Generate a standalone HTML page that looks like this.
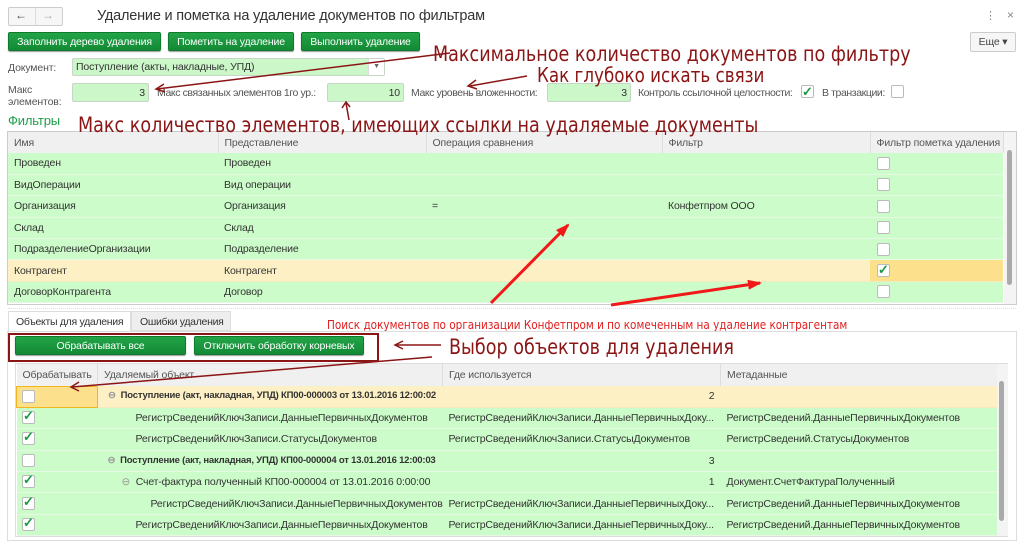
<!DOCTYPE html>
<html><head><meta charset="utf-8"><style>
*{box-sizing:border-box;margin:0;padding:0}
body{width:1024px;height:547px;overflow:hidden;background:#fff;font-family:"Liberation Sans",sans-serif;font-size:10.5px;color:#333;position:relative;letter-spacing:-0.15px}
.a{position:absolute;white-space:nowrap}
.gb{position:absolute;background:linear-gradient(#22a447,#138a35);border:1px solid #0f7a2c;color:#fff;font-size:10.5px;border-radius:2px;box-shadow:0 1px 1px #999;display:flex;align-items:center;justify-content:center;white-space:nowrap}
.fld{position:absolute;background:#ccf7c9;border:1px solid #c7d7c7;border-radius:2px;text-align:right;padding-right:3px;color:#333;display:flex;align-items:center;justify-content:flex-end}
.cb{position:absolute;width:13px;height:13px;background:#fff;border:1px solid #bbb;border-radius:2px}
.ck{position:absolute;color:#1a9940;font-size:13px;font-weight:bold;line-height:13px}
.red{position:absolute;color:#8b1515;font-family:"DejaVu Sans Condensed","DejaVu Sans",sans-serif;white-space:nowrap;transform-origin:0 0;letter-spacing:0}
table{border-collapse:collapse;table-layout:fixed}
td{white-space:nowrap;overflow:hidden;padding-left:6px;vertical-align:middle;line-height:12px}
.hd td{background:#f0f0f0;color:#555;border-right:1px solid #ddd}
.g td{background:#ccfcc9;border-bottom:1px solid #e6f7e4}
.y td{background:#fdf0c4;border-bottom:1px solid #f5e9c0}
.b{font-weight:bold;font-size:9.5px;padding-left:10px;letter-spacing:-0.2px}
</style></head><body>
<div class="a" style="left:8px;top:7px;width:55px;height:19px;border:1px solid #ccc;border-radius:2px;background:#f6f6f6"></div>
<div class="a" style="left:35px;top:8px;width:1px;height:17px;background:#ddd"></div>
<div class="a" style="left:15px;top:8px;font-size:12px;color:#444">←</div>
<div class="a" style="left:42px;top:8px;font-size:12px;color:#aaa">→</div>
<div class="a" style="left:97px;top:8px;font-size:14.5px;color:#333;letter-spacing:-0.2px">Удаление и пометка на удаление документов по фильтрам</div>
<div class="a" style="left:985px;top:9px;color:#888;font-size:11px">⋮</div>
<div class="a" style="left:1007px;top:8px;color:#888;font-size:12px">×</div>
<div class="gb" style="left:8px;top:32px;width:153px;height:19px">Заполнить дерево удаления</div>
<div class="gb" style="left:168px;top:32px;width:126px;height:19px">Пометить на удаление</div>
<div class="gb" style="left:301px;top:32px;width:119px;height:19px">Выполнить удаление</div>
<div class="a" style="left:970px;top:32px;width:46px;height:20px;border:1px solid #ccc;border-radius:2px;background:#f6f6f6;text-align:center;line-height:18px;color:#444">Еще ▾</div>
<div class="a" style="left:8px;top:62px;color:#555">Документ:</div>
<div class="fld" style="left:72px;top:58px;width:313px;height:18px;justify-content:flex-start;padding-left:3px">Поступление (акты, накладные, УПД)</div>
<div class="a" style="left:368px;top:59px;width:16px;height:16px;background:#fff;border-left:1px solid #ddd;text-align:center;font-size:7px;line-height:16px;color:#666">▼</div>
<div class="a" style="left:8px;top:84px;color:#555;line-height:12px">Макс<br>элементов:</div>
<div class="fld" style="left:72px;top:83px;width:77px;height:19px">3</div>
<div class="a" style="left:157px;top:87px;color:#555;letter-spacing:-0.4px">Макс связанных элементов 1го ур.:</div>
<div class="fld" style="left:327px;top:83px;width:77px;height:19px">10</div>
<div class="a" style="left:411px;top:87px;color:#555;letter-spacing:-0.4px">Макс уровень вложенности:</div>
<div class="fld" style="left:547px;top:83px;width:84px;height:19px">3</div>
<div class="a" style="left:638px;top:87px;color:#555;letter-spacing:-0.45px">Контроль ссылочной целостности:</div>
<div class="cb" style="left:801px;top:85px"></div><div class="ck" style="left:802px;top:85px">✓</div>
<div class="a" style="left:822px;top:87px;color:#555;letter-spacing:-0.4px">В транзакции:</div>
<div class="cb" style="left:891px;top:85px"></div>
<div class="a" style="left:8px;top:113px;color:#1fa04a;font-size:13px">Фильтры</div>

<div class="a" style="left:7px;top:131px;width:1010px;height:174px;border:1px solid #ccc"></div>
<table class="a" style="left:8px;top:132px;width:995px">
<colgroup><col style="width:210px"><col style="width:208px"><col style="width:236px"><col style="width:208px"><col style="width:133px"></colgroup>
<tr class="hd" style="height:21px"><td>Имя</td><td>Представление</td><td>Операция сравнения</td><td>Фильтр</td><td>Фильтр пометка удаления</td></tr>
<tr class="g" style="height:21.4px"><td>Проведен</td><td>Проведен</td><td></td><td></td><td></td></tr>
<tr class="g" style="height:21.4px"><td>ВидОперации</td><td>Вид операции</td><td></td><td></td><td></td></tr>
<tr class="g" style="height:21.4px"><td>Организация</td><td>Организация</td><td>=</td><td>Конфетпром ООО</td><td></td></tr>
<tr class="g" style="height:21.4px"><td>Склад</td><td>Склад</td><td></td><td></td><td></td></tr>
<tr class="g" style="height:21.4px"><td>ПодразделениеОрганизации</td><td>Подразделение</td><td></td><td></td><td></td></tr>
<tr class="y" style="height:21.4px"><td>Контрагент</td><td>Контрагент</td><td></td><td></td><td style="background:#fde08c"></td></tr>
<tr class="g" style="height:21.4px"><td>ДоговорКонтрагента</td><td>Договор</td><td></td><td></td><td></td></tr>
</table>
<div class="a" style="left:1004px;top:132px;width:12px;height:172px;background:#f4f4f4"></div>
<div class="a" style="left:1007px;top:150px;width:5px;height:135px;background:#aaa;border-radius:3px"></div>
<div class="cb" style="left:877px;top:157px"></div>
<div class="cb" style="left:877px;top:178px"></div>
<div class="cb" style="left:877px;top:200px"></div>
<div class="cb" style="left:877px;top:221px"></div>
<div class="cb" style="left:877px;top:243px"></div>
<div class="cb" style="left:877px;top:264px"></div><div class="ck" style="left:878px;top:263px">✓</div>
<div class="cb" style="left:877px;top:285px"></div>
<div class="a" style="left:8px;top:308px;width:1008px;border-top:1px dotted #ddd"></div>

<div class="a" style="left:8px;top:311px;width:123px;height:21px;background:#fff;border:1px solid #ddd;border-bottom:none;padding:4px 0 0 7px;letter-spacing:-0.3px">Объекты для удаления</div>
<div class="a" style="left:131px;top:311px;width:100px;height:20px;background:#eee;border:1px solid #ddd;padding:4px 0 0 8px;letter-spacing:-0.3px">Ошибки удаления</div>
<div class="red" style="left:327px;top:317px;color:#e02020;font-size:12.5px;transform:scaleX(0.93)">Поиск документов по организации Конфетпром и по комеченным на удаление контрагентам</div>
<div class="a" style="left:7px;top:331px;width:1010px;height:210px;border:1px solid #ddd"></div>
<div class="a" style="left:8px;top:333px;width:371px;height:29px;border:2px solid #8b1515"></div>
<div class="gb" style="left:15px;top:336px;width:171px;height:19px">Обрабатывать все</div>
<div class="gb" style="left:194px;top:336px;width:170px;height:19px">Отключить обработку корневых</div>

<div class="a" style="left:15px;top:363px;width:993px;height:174px;border:1px solid #ddd"></div>
<table class="a" style="left:16px;top:364px;width:981px">
<colgroup><col style="width:81px"><col style="width:345px"><col style="width:278px"><col style="width:277px"></colgroup>
<tr class="hd" style="height:22px"><td>Обрабатывать</td><td>Удаляемый объект</td><td>Где используется</td><td>Метаданные</td></tr>
<tr class="y" style="height:21.4px"><td style="background:#fde08c;border:1px solid #f2b520"></td><td class="b"><span style="color:#999">⊖</span> &nbsp;Поступление (акт, накладная, УПД) КП00-000003 от 13.01.2016 12:00:02</td><td style="text-align:right;padding-right:6px">2</td><td></td></tr>
<tr class="g" style="height:21.4px"><td></td><td style="padding-left:38px">РегистрСведенийКлючЗаписи.ДанныеПервичныхДокументов</td><td>РегистрСведенийКлючЗаписи.ДанныеПервичныхДоку...</td><td>РегистрСведений.ДанныеПервичныхДокументов</td></tr>
<tr class="g" style="height:21.4px"><td></td><td style="padding-left:38px">РегистрСведенийКлючЗаписи.СтатусыДокументов</td><td>РегистрСведенийКлючЗаписи.СтатусыДокументов</td><td>РегистрСведений.СтатусыДокументов</td></tr>
<tr class="g" style="height:21.4px"><td></td><td class="b"><span style="color:#999">⊖</span> &nbsp;Поступление (акт, накладная, УПД) КП00-000004 от 13.01.2016 12:00:03</td><td style="text-align:right;padding-right:6px">3</td><td></td></tr>
<tr class="g" style="height:21.4px"><td></td><td style="padding-left:24px"><span style="color:#999">⊖</span> &nbsp;Счет-фактура полученный КП00-000004 от 13.01.2016 0:00:00</td><td style="text-align:right;padding-right:6px">1</td><td>Документ.СчетФактураПолученный</td></tr>
<tr class="g" style="height:21.4px"><td></td><td style="padding-left:53px">РегистрСведенийКлючЗаписи.ДанныеПервичныхДокументов</td><td>РегистрСведенийКлючЗаписи.ДанныеПервичныхДоку...</td><td>РегистрСведений.ДанныеПервичныхДокументов</td></tr>
<tr class="g" style="height:21.4px"><td></td><td style="padding-left:38px">РегистрСведенийКлючЗаписи.ДанныеПервичныхДокументов</td><td>РегистрСведенийКлючЗаписи.ДанныеПервичныхДоку...</td><td>РегистрСведений.ДанныеПервичныхДокументов</td></tr>
</table>
<div class="a" style="left:997px;top:364px;width:11px;height:172px;background:#f4f4f4"></div>
<div class="a" style="left:999px;top:381px;width:5px;height:140px;background:#aaa;border-radius:3px"></div>
<div class="cb" style="left:22px;top:390px"></div>
<div class="cb" style="left:22px;top:411px"></div><div class="ck" style="left:23px;top:409px">✓</div>
<div class="cb" style="left:22px;top:432px"></div><div class="ck" style="left:23px;top:430px">✓</div>
<div class="cb" style="left:22px;top:454px"></div>
<div class="cb" style="left:22px;top:475px"></div><div class="ck" style="left:23px;top:473px">✓</div>
<div class="cb" style="left:22px;top:497px"></div><div class="ck" style="left:23px;top:495px">✓</div>
<div class="cb" style="left:22px;top:518px"></div><div class="ck" style="left:23px;top:516px">✓</div>

<div class="red" style="left:433px;top:42px;font-size:21px;transform:scaleX(0.93)">Максимальное количество документов по фильтру</div>
<div class="red" style="left:537px;top:63px;font-size:20px;transform:scaleX(0.93)">Как глубоко искать связи</div>
<div class="red" style="left:78px;top:113px;font-size:21px;transform:scaleX(0.93)">Макс количество элементов, имеющих ссылки на удаляемые документы</div>
<div class="red" style="left:449px;top:335px;font-size:21px;transform:scaleX(0.93)">Выбор объектов для удаления</div>
<svg class="a" style="left:0;top:0" width="1024" height="547">
<defs>
<marker id="r" markerWidth="14" markerHeight="10" refX="12" refY="5" orient="auto" markerUnits="userSpaceOnUse"><path d="M0,0 L14,5 L0,10 Z" fill="#f01818"/></marker>
</defs>
<g stroke="#8b1515" stroke-width="1.5" fill="none">
<line x1="450" y1="53" x2="157" y2="89"/>
<path d="M164,84 L156,89 L165,92"/>
<line x1="527" y1="76" x2="470" y2="86"/>
<path d="M476,80 L468,86 L477,89"/>
<line x1="349" y1="120" x2="346" y2="103"/>
<path d="M342,108 L346,102 L350,107"/>
<line x1="441" y1="345" x2="396" y2="345"/>
<path d="M403,341 L395,345 L403,349"/>
<line x1="432" y1="357" x2="72" y2="387"/>
<path d="M79,382 L71,387 L79,391"/>
</g>
<g stroke="#f01818" stroke-width="3" fill="none">
<line x1="491" y1="303" x2="568" y2="225" marker-end="url(#r)"/>
<line x1="611" y1="305" x2="760" y2="283" marker-end="url(#r)"/>
</g>
</svg>
</body></html>
